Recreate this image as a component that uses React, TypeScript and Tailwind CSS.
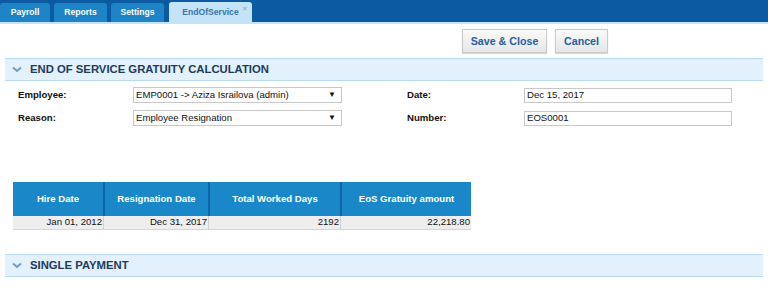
import React from "react";

const TABS = [
  { label: "Payroll", w: "w-[50px]" },
  { label: "Reports", w: "w-[53px]" },
  { label: "Settings", w: "w-[53px]" },
];

const COLS = [
  { label: "Hire Date", value: "Jan 01, 2012", w: "w-[90px]" },
  { label: "Resignation Date", value: "Dec 31, 2017", w: "w-[105px]" },
  { label: "Total Worked Days", value: "2192", w: "w-[132px]" },
  { label: "EoS Gratuity amount", value: "22,218.80", w: "w-[131px]" },
];

function Chevron() {
  return (
    <svg width="10" height="7" viewBox="0 0 10 7" className="shrink-0">
      <path d="M1 1.5 L5 5 L9 1.5" fill="none" stroke="#6a9fcc" strokeWidth="2" />
    </svg>
  );
}

function SectionHeader({ title }: { title: string }) {
  return (
    <div className="mx-[5px] flex h-[23px] items-center gap-[8px] border-y border-[#b9daf1] bg-[#e2f1fb] pl-[7px]">
      <Chevron />
      <span className="text-[11.3px] font-bold text-[#1e3a5c]">{title}</span>
    </div>
  );
}

function Select({ value }: { value: string }) {
  return (
    <div className="flex h-[16px] w-[209px] items-center justify-between border border-[#c8c8c8] bg-white pl-[2px] pr-[5px] text-[9.6px] text-[#111]">
      <span>{value}</span>
      <span className="text-[8px]">▼</span>
    </div>
  );
}

function Input({ value }: { value: string }) {
  return (
    <div className="flex h-[15px] w-[208px] items-center border border-[#c8c8c8] bg-white pl-[2px] text-[9.6px] text-[#111]">
      {value}
    </div>
  );
}

function Field({ label, w, children }: { label: string; w: string; children: React.ReactNode }) {
  return (
    <div className="flex items-center">
      <span className={`${w} text-[9.6px] font-bold text-[#111]`}>{label}</span>
      {children}
    </div>
  );
}

export default function App() {
  return (
    <div
      className="h-[301px] w-[768px] overflow-hidden bg-white"
      style={{ fontFamily: '"Liberation Sans", Arial, sans-serif' }}
    >
      {/* tab strip */}
      <div className="flex h-[22px] items-end gap-[4px] bg-[#0b5aa2] pr-2">
        {TABS.map((t) => (
          <div
            key={t.label}
            className={`flex h-[19px] ${t.w} items-center justify-center rounded-t-[3px] bg-[#1d84c8] text-[8.6px] font-bold text-white`}
          >
            {t.label}
          </div>
        ))}
        <div className="relative ml-[1px] flex h-[20px] w-[83px] items-center justify-center rounded-t-[3px] bg-[#c4e3f7] text-[8.6px] font-bold text-[#3a74aa]">
          EndOfService
          <span className="absolute right-[4px] top-[2px] text-[7px] font-normal text-[#8aaed0]">✕</span>
        </div>
      </div>
      <div className="h-[2px] bg-[#c4e3f7]" />

      {/* toolbar */}
      <div className="flex h-[34px] items-center gap-[8px] pl-[462px]">
        <button className="h-[24px] w-[85px] border border-[#c9c9c9] bg-gradient-to-b from-[#fafafa] to-[#e6e6e6] text-[10.7px] font-bold text-[#24609e] shadow-[0_1px_1px_rgba(0,0,0,0.15)]">
          Save &amp; Close
        </button>
        <button className="h-[24px] w-[53px] border border-[#c9c9c9] bg-gradient-to-b from-[#fafafa] to-[#e6e6e6] text-[10.7px] font-bold text-[#24609e] shadow-[0_1px_1px_rgba(0,0,0,0.15)]">
          Cancel
        </button>
      </div>

      <SectionHeader title="END OF SERVICE GRATUITY CALCULATION" />

      {/* form */}
      <div className="grid grid-cols-[389px_1fr] gap-y-[7px] pl-[18px] pt-[6px]">
        <Field label="Employee:" w="w-[115px]">
          <Select value="EMP0001 -> Aziza Israilova (admin)" />
        </Field>
        <Field label="Date:" w="w-[117px]">
          <Input value="Dec 15, 2017" />
        </Field>
        <Field label="Reason:" w="w-[115px]">
          <Select value="Employee Resignation" />
        </Field>
        <Field label="Number:" w="w-[117px]">
          <Input value="EOS0001" />
        </Field>
      </div>

      {/* result table */}
      <div className="ml-[13px] mt-[56px] flex w-[458px]">
        {COLS.map((c, i) => (
          <div key={c.label} className={`${c.w} flex flex-col`}>
            <div
              className={`flex h-[34px] items-center justify-center bg-[#1a87c8] text-[9.6px] font-bold text-white ${
                i > 0 ? "border-l-2 border-[#0f65a6]" : ""
              }`}
            >
              {c.label}
            </div>
            <div
              className={`flex h-[14px] items-center justify-end border-b border-[#d6d6d6] bg-[#eeeeee] pr-[1px] text-[9.6px] text-[#111] ${
                i > 0 ? "border-l border-l-[#d0d0d0]" : ""
              }`}
            >
              {c.value}
            </div>
          </div>
        ))}
      </div>

      <div className="mt-[24px]">
        <SectionHeader title="SINGLE PAYMENT" />
      </div>
    </div>
  );
}
